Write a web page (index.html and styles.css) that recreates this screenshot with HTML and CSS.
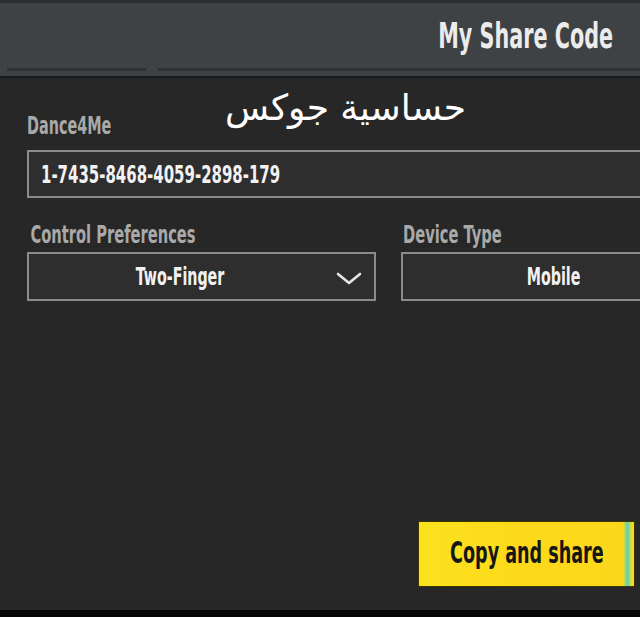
FILE: index.html
```html
<!DOCTYPE html>
<html lang="en">

<head>
    <meta charset="UTF-8">
    <meta name="viewport" content="width=device-width, initial-scale=1.0">
    <title>My Share Code</title>
    <link rel="stylesheet" href="styles.css">
</head>

<body>
    <div class="screen">
        <header class="header">
            <h1 class="title">My Share Code</h1>
            <div class="tabs">
                <span class="tab tab-short"></span>
                <span class="tab tab-long"></span>
            </div>
        </header>

        <main class="panel">
            <p class="caption" dir="rtl" lang="ar">حساسية جوكس</p>

            <div class="field">
                <label class="label label-name">Dance4Me</label>
                <div class="box code-box"><span class="code-text">1-7435-8468-4059-2898-179</span></div>
            </div>

            <div class="row">
                <div class="field field-control">
                    <label class="label">Control Preferences</label>
                    <div class="box select-box">
                        <span class="box-text select-text">Two-Finger</span>
                        <svg class="chevron" viewBox="0 0 26 14" width="26" height="14">
                            <path d="M2 2 L13 11 L24 2" fill="none" stroke="#e6e6e6" stroke-width="2.6" stroke-linecap="round" stroke-linejoin="round" />
                        </svg>
                    </div>
                </div>
                <div class="field field-device">
                    <label class="label">Device Type</label>
                    <div class="box value-box"><span class="box-text">Mobile</span></div>
                </div>
            </div>

            <div class="actions">
                <button class="share-button"><span class="share-text">Copy and share</span></button>
            </div>
        </main>

        <div class="bottom-bar"></div>
    </div>
</body>

</html>
```

FILE: styles.css
```css
body {
    margin: 0;
    background-color: #272727;
    font-family: "DejaVu Sans Condensed", "DejaVu Sans", sans-serif;
    font-weight: bold;
    overflow: hidden;
}

.screen {
    width: 640px;
    height: 617px;
    display: flex;
    flex-direction: column;
    overflow: hidden;
}

/* header strip */
.header {
    height: 78px;
    background-color: #3f4245;
    border-top: 3px solid #2b2d2f;
    border-bottom: 2px solid #1b1b1b;
    box-sizing: border-box;
    display: flex;
    flex-direction: column;
}

.title {
    margin: 0;
    padding: 15px 42px 0 0;
    height: 48px;
    box-sizing: border-box;
    text-align: right;
    color: #ececec;
    font-size: 36px;
    line-height: 1;
    white-space: nowrap;
    transform: scaleX(0.64);
    transform-origin: right center;
}

.tabs {
    display: flex;
    gap: 12px;
    padding: 0 0 0 7px;
    margin-top: 17px;
}

.tab {
    height: 3px;
    background-color: #2f3133;
}

.tab-short {
    width: 139px;
}

.tab-long {
    flex: 1;
}

/* main panel */
.panel {
    flex: 1;
    position: relative;
    background-color: #272727;
    border-top-left-radius: 6px;
    margin-left: 2px;
    padding: 36px 0 0 25px;
    display: flex;
    flex-direction: column;
}

.caption {
    position: absolute;
    top: 9px;
    left: 223px;
    margin: 0;
    font-family: "DejaVu Sans", sans-serif;
    font-weight: normal;
    font-size: 36px;
    color: #ffffff;
}

.field {
    display: flex;
    flex-direction: column;
}

.label {
    color: #a9a9a9;
    font-size: 24px;
    height: 36px;
    line-height: 24px;
    white-space: nowrap;
    transform: scaleX(0.68);
    transform-origin: left center;
}

.label-name {
    font-size: 25px;
    transform: scaleX(0.64);
}

.box {
    box-sizing: border-box;
    height: 48px;
    border: 2px solid #8b8b8b;
    background-color: #2e2e2e;
    color: #f2f2f2;
    display: flex;
    align-items: center;
}

.code-box {
    width: 700px;
    padding-left: 12px;
    font-size: 25px;
}

.code-text {
    display: inline-block;
    white-space: nowrap;
    transform: scaleX(0.665);
    transform-origin: left center;
}

.row {
    display: flex;
    gap: 25px;
    margin-top: 25px;
}

.field-control .label {
    padding-left: 5px;
    height: 29px;
}

.field-device .label {
    padding-left: 3px;
    height: 29px;
}

.select-box {
    width: 349px;
    height: 49px;
    position: relative;
    justify-content: center;
    font-size: 24px;
}

.box-text {
    display: inline-block;
    white-space: nowrap;
    transform: scaleX(0.66);
    transform-origin: center;
}

.select-text {
    margin-right: 42px;
}

.chevron {
    position: absolute;
    right: 12px;
    top: 18px;
}

.value-box {
    width: 305px;
    height: 49px;
    justify-content: center;
    font-size: 24px;
}

/* action button */
.actions {
    display: flex;
    justify-content: flex-end;
    margin-top: 220px;
    padding-right: 5px;
}

.share-button {
    width: 217px;
    height: 66px;
    border: 1px solid #3a3400;
    background: linear-gradient(90deg, #fbe21e 0%, #fcd91a 50%, #fbd81b 95%, #4fd6c8 97%, #fbd81b 99%);
    color: #161616;
    font-family: "DejaVu Sans Condensed", "DejaVu Sans", sans-serif;
    font-weight: bold;
    font-size: 31px;
    padding: 0 0 4px 0;
    cursor: pointer;
    overflow: hidden;
    display: flex;
    align-items: center;
    justify-content: center;
}

.share-text {
    display: inline-block;
    white-space: nowrap;
    transform: scaleX(0.63);
    transform-origin: center;
}

.bottom-bar {
    height: 7px;
    background-color: #050505;
}
```
